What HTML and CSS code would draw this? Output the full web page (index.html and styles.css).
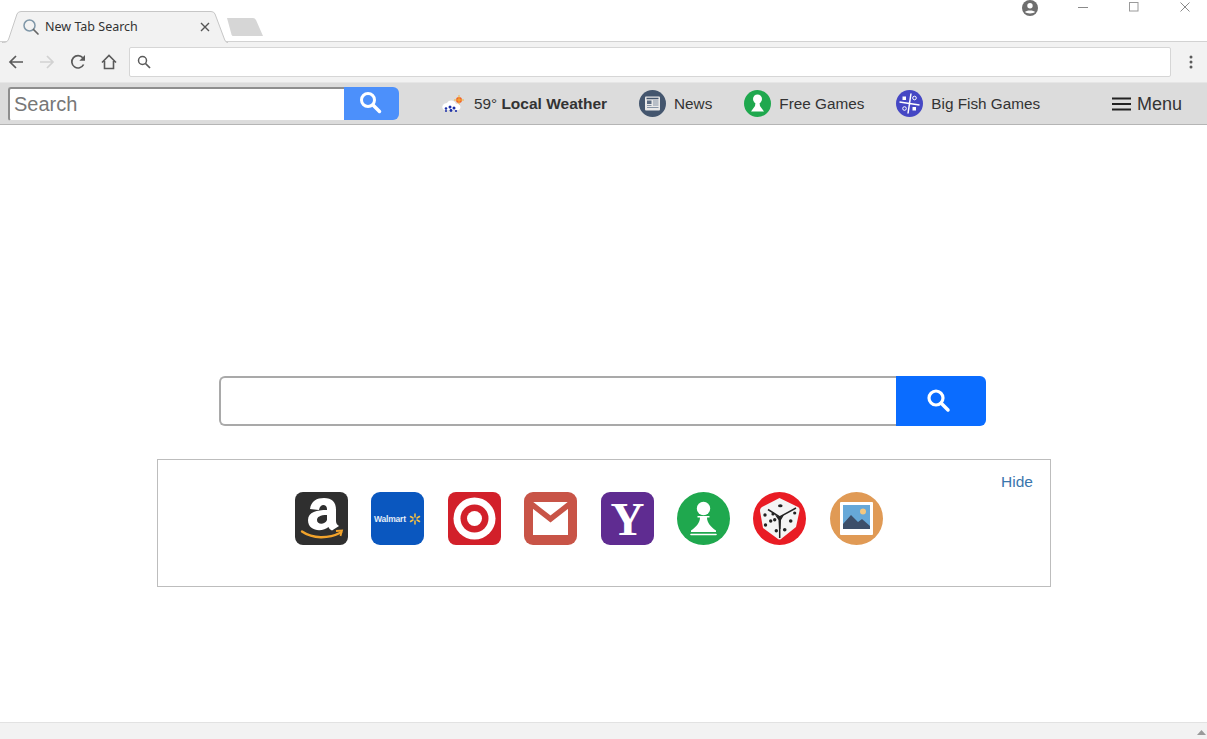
FILE: index.html
```html
<!DOCTYPE html>
<html lang="en">
<head>
<meta charset="utf-8">
<title>New Tab Search</title>
<link rel="stylesheet" href="styles.css">
</head>
<body>
<div class="window">
  <header class="titlebar">
    <div class="tab">
      <svg class="tab-shape" width="226" height="32" viewBox="0 0 226 32"><path d="M0 31.500C5 31.500 6 30 7 27L15 3Q16 .5 19 .5H209Q212 .5 213 3L222 27C223 30 224 31.500 226 31.500" fill="#f2f2f2" stroke="#c6c6c6"/></svg>
      <svg class="tab-icon" width="18" height="18" viewBox="0 0 18 18"><circle cx="7.500" cy="7.500" r="5.500" fill="none" stroke="#7f97a8" stroke-width="1.500"/><path d="M11.500 11.500L16 16" stroke="#666" stroke-width="1.700" stroke-linecap="round"/></svg>
      <span class="tab-title">New Tab Search</span>
      <svg class="tab-close" width="10" height="10" viewBox="0 0 10 10"><path d="M1 1L9 9M9 1L1 9" stroke="#555" stroke-width="1.400"/></svg>
    </div>
    <svg class="new-tab" width="38" height="18" viewBox="0 0 38 18"><path d="M1 0H27Q29 0 30 2L37 18H7Q6 18 5.500 16.500Z" fill="#d6d6d6"/></svg>
    <div class="window-controls">
      <svg class="profile" width="16" height="16" viewBox="0 0 16 16"><circle cx="8" cy="8" r="8" fill="#6e6e6e"/><circle cx="8" cy="5.800" r="2.700" fill="#fff"/><path d="M2.900 12.100C4 9.800 12 9.800 13.100 12.100C11.500 14 4.500 14 2.900 12.100Z" fill="#fff"/></svg>
      <svg class="win-btn" width="10" height="10" viewBox="0 0 10 10"><path d="M0 5.500H10" stroke="#8a8a8a"/></svg>
      <svg class="win-btn" width="10" height="10" viewBox="0 0 10 10"><rect x=".5" y=".5" width="8.500" height="8.500" fill="none" stroke="#9a9a9a"/></svg>
      <svg class="win-btn" width="10" height="10" viewBox="0 0 10 10"><path d="M.5 .5L9.500 9.500M9.500 .5L.5 9.500" stroke="#8a8a8a"/></svg>
    </div>
  </header>

  <nav class="toolbar">
    <svg class="nav-icon" width="16" height="16" viewBox="0 0 16 16"><path d="M15 8H2M8 2L2 8L8 14" fill="none" stroke="#5a5a5a" stroke-width="1.700"/></svg>
    <svg class="nav-icon" width="16" height="16" viewBox="0 0 16 16"><path d="M1 8H14M8 2L14 8L8 14" fill="none" stroke="#d2d2d2" stroke-width="1.700"/></svg>
    <svg class="nav-icon" width="16" height="16" viewBox="0 0 16 16"><path d="M13.600 10.500A6.200 6.200 0 1 1 12.800 3.800" fill="none" stroke="#5a5a5a" stroke-width="1.700"/><path d="M15 1V6.700H9.300Z" fill="#5a5a5a"/></svg>
    <svg class="nav-icon" width="16" height="16" viewBox="0 0 16 16"><path d="M1 8.500L8 1.500L15 8.500M3.500 7V14.500H12.500V7" fill="none" stroke="#5a5a5a" stroke-width="1.600"/></svg>
    <div class="omnibox">
      <svg width="14" height="14" viewBox="0 0 14 14"><circle cx="5.500" cy="5.500" r="4" fill="none" stroke="#5a5a5a" stroke-width="1.500"/><path d="M8.500 8.500L13 13" stroke="#5a5a5a" stroke-width="1.700"/></svg>
    </div>
    <svg class="kebab" width="4" height="14" viewBox="0 0 4 14"><circle cx="2" cy="2" r="1.500" fill="#5a5a5a"/><circle cx="2" cy="7" r="1.500" fill="#5a5a5a"/><circle cx="2" cy="12" r="1.500" fill="#5a5a5a"/></svg>
  </nav>

  <div class="extbar">
    <div class="ext-search">
      <div class="ext-input">Search</div>
      <div class="ext-button">
        <svg width="24" height="24" viewBox="0 0 24 24"><circle cx="10" cy="10" r="6.500" fill="none" stroke="#fff" stroke-width="3"/><path d="M15 15L21.500 21.500" stroke="#fff" stroke-width="3.500" stroke-linecap="round"/></svg>
      </div>
    </div>
    <div class="ext-links">
      <a class="ext-link link-weather">
        <svg width="24" height="18" viewBox="0 0 24 18"><circle cx="18" cy="5" r="3" fill="#f0632a"/><path d="M18 0V10M13 5H23" stroke="#f5b13a" stroke-width="1"/><path d="M2 14C0 11 3 8 6 8C8 4 14 5 15 9C19 8 21 13 18 15H3Z" fill="#fff"/><g fill="#1c2fa8"><circle cx="5" cy="13.500" r="1.300"/><circle cx="9" cy="12" r="1.500"/><circle cx="13" cy="13" r="1.500"/><circle cx="10" cy="15.500" r="1.400"/><circle cx="5" cy="16" r="1"/><circle cx="15" cy="16" r="1.100"/></g></svg>
        <span>59° <b class="weather-name">Local Weather</b></span>
      </a>
      <a class="ext-link link-news">
        <svg width="27" height="27" viewBox="0 0 27 27"><circle cx="13.500" cy="13.500" r="13.500" fill="#44566e"/><rect x="6" y="6.500" width="15" height="14" rx="1" fill="#e8e8e8"/><path d="M7.500 8.500H19.500" stroke="#44566e" stroke-width="1.500"/><rect x="8" y="10.500" width="4.500" height="3.500" fill="#5a6a80"/><path d="M14 11H19.500M14 13H19.500M14 15H19.500M8 15.500H12.500M8 17.500H19.500" stroke="#8794a5"/></svg>
        <span>News</span>
      </a>
      <a class="ext-link link-games">
        <svg width="27" height="27" viewBox="0 0 27 27"><circle cx="13.500" cy="13.500" r="13.500" fill="#1fa84e"/><circle cx="13.500" cy="9" r="4.500" fill="#fff"/><path d="M11.500 12.500H15.500L16 16L20 21.500H7L11 16Z" fill="#fff"/></svg>
        <span>Free Games</span>
      </a>
      <a class="ext-link link-fish">
        <svg width="27" height="27" viewBox="0 0 27 27"><circle cx="13.500" cy="13.500" r="13.500" fill="#4547c4"/><path d="M15 3.500L12 23.500M3.500 12L23.500 15" stroke="#fff" stroke-width="1.500"/><rect x="6.500" y="6.500" width="3.500" height="3.500" fill="#fff"/><circle cx="18.500" cy="8" r="1.800" fill="none" stroke="#fff"/><circle cx="8.500" cy="18.500" r="1.800" fill="none" stroke="#fff"/><rect x="16.500" y="17" width="3.500" height="3.500" fill="#fff"/></svg>
        <span>Big Fish Games</span>
      </a>
    </div>
    <a class="ext-menu">
      <svg width="19" height="14" viewBox="0 0 19 14"><path d="M0 1.500H19M0 7H19M0 12.500H19" stroke="#222" stroke-width="2.200"/></svg>
      <span class="menu-label">Menu</span>
    </a>
  </div>

  <main class="page">
    <div class="main-search">
      <div class="main-input"></div>
      <div class="main-button">
        <svg width="26" height="26" viewBox="0 0 26 26"><circle cx="11" cy="11" r="7" fill="none" stroke="#fff" stroke-width="3.200"/><path d="M16.500 16.500L23 23" stroke="#fff" stroke-width="3.500" stroke-linecap="round"/></svg>
      </div>
    </div>
    <section class="panel">
      <a class="hide-link">Hide</a>
      <div class="tiles">
        <svg class="tile" viewBox="0 0 53 53"><rect width="53" height="53" rx="8" fill="#2f2f2f"/><path fill-rule="evenodd" d="M15 17C16 9 22 6 29 6C37 6 41 10 41 18V29C41 31 42 33 44 34L37 38.500C35 37.500 34 36.500 33.500 35C28 40 13 40 13 28C13 20 22 18 32 18V17C32 12 25 11 24 18ZM32 23C25 23 22 25 22 28C22 33 30 33 32 28Z" fill="#fff"/><path d="M7 39.500C18 47 33 47 46 40.500" fill="none" stroke="#f2a32b" stroke-width="2.400" stroke-linecap="round"/><path d="M41 39L47 38.500L45.500 44" fill="none" stroke="#f2a32b" stroke-width="1.800"/></svg>
        <svg class="tile" viewBox="0 0 53 53"><rect width="53" height="53" rx="9" fill="#0a57bf"/><text class="wm-text" x="3" y="29.500">Walmart</text><path d="M44 22V25M44 29V32M39.500 24.500L42 26M48.500 24.500L46 26M39.500 29.500L42 28M48.500 29.500L46 28" stroke="#f6c244" stroke-width="1.500" stroke-linecap="round"/></svg>
        <svg class="tile" viewBox="0 0 53 53"><rect width="53" height="53" rx="8" fill="#d2202a"/><circle cx="26.500" cy="26.500" r="21" fill="#fff"/><circle cx="26.500" cy="26.500" r="14" fill="#d2202a"/><circle cx="26.500" cy="26.500" r="7.500" fill="#fff"/></svg>
        <svg class="tile" viewBox="0 0 53 53"><rect width="53" height="53" rx="9" fill="#c85447"/><rect x="9" y="10" width="35" height="33" fill="#fff"/><path d="M6 11L26.500 27L47 11" fill="none" stroke="#c85447" stroke-width="5.500"/></svg>
        <svg class="tile" viewBox="0 0 53 53"><rect width="53" height="53" rx="9" fill="#5f2c91"/><text class="yahoo-text" x="26.500" y="43">Y</text></svg>
        <svg class="tile" viewBox="0 0 53 53"><circle cx="26.500" cy="26.500" r="26.500" fill="#1fa84e"/><circle cx="26.500" cy="16.500" r="6.700" fill="#fff"/><path d="M20.500 24H32.500V25.500H30C30 31 34 35 39 38.500V40H14V38.500C19 35 23 31 23 25.500H20.500Z" fill="#fff"/><path d="M14 42.500H39" stroke="#fff" stroke-width="1.600" stroke-linecap="round"/></svg>
        <svg class="tile" viewBox="0 0 53 53"><circle cx="26.500" cy="26.500" r="26.500" fill="#e91c24"/><path d="M26.500 6L45 15Q47 16 46.500 19L43 35L28 47Q26.500 48 25 47L10 36L7 19Q7 16 9 15Z" fill="#f4f4f4"/><path d="M15 17.500L26.700 25L43 16M26.700 25L26.700 46" fill="none" stroke="#222" stroke-width="1.500"/><path d="M22 23L26.700 25L31 23L28 28L27.500 37H26L25.500 28Z" fill="#222"/><g fill="#222"><ellipse cx="27.300" cy="13.700" rx="2.300" ry="1.500"/><circle cx="12" cy="23" r="1.700"/><circle cx="20" cy="22" r="1.600"/><circle cx="17.700" cy="29" r="1.700"/><circle cx="12.500" cy="33" r="1.700"/><circle cx="21.700" cy="27.700" r="1.700"/><circle cx="37.700" cy="29" r="1.800"/><circle cx="41.700" cy="21" r="1.600"/><circle cx="31.700" cy="37.700" r="1.800"/><circle cx="23.300" cy="38.700" r="1.700"/></g></svg>
        <svg class="tile" viewBox="0 0 53 53"><circle cx="26.500" cy="26.500" r="26.500" fill="#e09a55"/><rect x="10" y="10" width="33" height="33" rx="1" fill="#fff"/><rect x="13" y="13" width="27" height="24" fill="#66a8d8"/><circle cx="33" cy="19.500" r="3" fill="#f4c77f"/><path d="M13 37V32L21 23L28 30L32 27L40 34V37Z" fill="#3d4f6a"/></svg>
      </div>
    </section>
  </main>

  <footer class="statusbar">
    <svg width="9" height="5" viewBox="0 0 9 5"><path d="M4.500 0L9 5H0Z" fill="#9a9a9a"/></svg>
  </footer>
</div>
</body>
</html>
```

FILE: styles.css
```css
* { box-sizing: border-box; }
html, body { margin: 0; padding: 0; background: #fff; }
body { font-family: "Liberation Sans", Arial, sans-serif; color: #333; overflow: hidden; }

.window { display: flex; flex-direction: column; width: 1207px; height: 739px; }

.titlebar { display: flex; align-items: flex-end; height: 42px; flex: none; padding-left: 2px; border-bottom: 1px solid #d2d2d2; }
.tab { position: relative; display: flex; align-items: center; width: 226px; height: 31px; margin-bottom: -1px; padding: 0 18px 0 20px; }
.tab-shape { position: absolute; left: 0; top: 0; }
.tab-icon { position: relative; margin-right: 5px; }
.tab-title { position: relative; flex: 1; margin-top: 1px; margin-bottom: 2px; font-family: "Noto Sans", sans-serif; font-size: 12.500px; color: #333; }
.tab-close { position: relative; }
.new-tab { margin: 0 0 5px -2px; }
.window-controls { display: flex; align-items: flex-start; align-self: flex-start; margin-left: auto; padding-right: 17px; }
.profile { margin-right: 40px; }
.win-btn { margin-top: 2px; margin-left: 41px; }
.profile + .win-btn { margin-left: 0; }

.toolbar { display: flex; align-items: center; height: 40px; flex: none; background: #f2f2f2; padding-left: 8px; }
.nav-icon { margin-right: 15px; flex: none; }
.omnibox { display: flex; align-items: center; width: 1042px; height: 30px; margin-left: -3px; padding-left: 7px; background: #fff; border: 1px solid #d6d6d6; border-radius: 2px; }
.kebab { margin-left: 18px; }

.extbar { display: flex; align-items: center; height: 43px; flex: none; background: #dcdcdc; border-bottom: 1px solid #b5b5b5; border-top: 1px solid #e6e6e6; }
.ext-search { display: flex; margin-left: 8px; width: 391px; height: 34px; }
.ext-input { width: 336px; height: 34px; padding: 3px 0 0 4px; background: #fff; border: 2px solid #8e8e8e; border-right: 0; border-bottom: 1px solid #ddd; border-radius: 3px 0 0 3px; font-size: 20px; color: #777; line-height: 24px; }
.ext-button { display: flex; align-items: center; justify-content: center; width: 55px; height: 33px; padding: 0 4px 2px 0; background: #4c90fb; border-radius: 0 6px 6px 0; }
.ext-links { display: flex; align-items: center; margin-left: 42px; font-size: 15.300px; color: #333; }
.ext-link { display: flex; align-items: center; }
.weather-name { font-size: 15.500px; }
.link-weather svg { margin-right: 9px; }
.link-weather, .link-news, .link-games { margin-right: 32px; }
.link-news svg, .link-games svg, .link-fish svg { margin-right: 8px; }
.ext-menu { display: flex; align-items: center; margin-left: auto; margin-right: 25px; font-size: 18px; color: #333; }
.ext-menu svg { margin-right: 6px; }
.menu-label { margin-top: 2px; }

.page { flex: 1; display: flex; flex-direction: column; padding: 251px 0 0 157px; }
.main-search { display: flex; width: 767px; height: 50px; margin-left: 62px; }
.main-input { flex: 1; background: #fff; border: 2px solid #a9a9a9; border-right: 0; border-radius: 6px 0 0 6px; }
.main-button { display: flex; align-items: center; justify-content: center; width: 90px; padding: 0 6px 2px 0; background: #0a6cff; border-radius: 0 6px 6px 0; }
.panel { position: relative; width: 894px; height: 128px; margin-top: 33px; border: 1px solid #bdbdbd; }
.hide-link { position: absolute; right: 17px; top: 13px; font-size: 15.500px; color: #3a76ad; }
.tiles { display: flex; gap: 23.400px; padding: 32px 0 0 137px; }
.tile { display: block; width: 53px; height: 53px; flex: none; }
.wm-text { font-family: "Liberation Sans", Arial, sans-serif; font-size: 8.500px; font-weight: 700; fill: #e4edf8; letter-spacing: -.2px; }
.yahoo-text { font-family: "Liberation Serif", "Times New Roman", serif; font-size: 47px; font-weight: 700; fill: #fff; text-anchor: middle; }

.statusbar { display: flex; justify-content: flex-end; align-items: center; height: 17px; flex: none; padding: 3px 1px 0 0; background: #f2f2f2; border-top: 1px solid #e2e2e2; }
```
